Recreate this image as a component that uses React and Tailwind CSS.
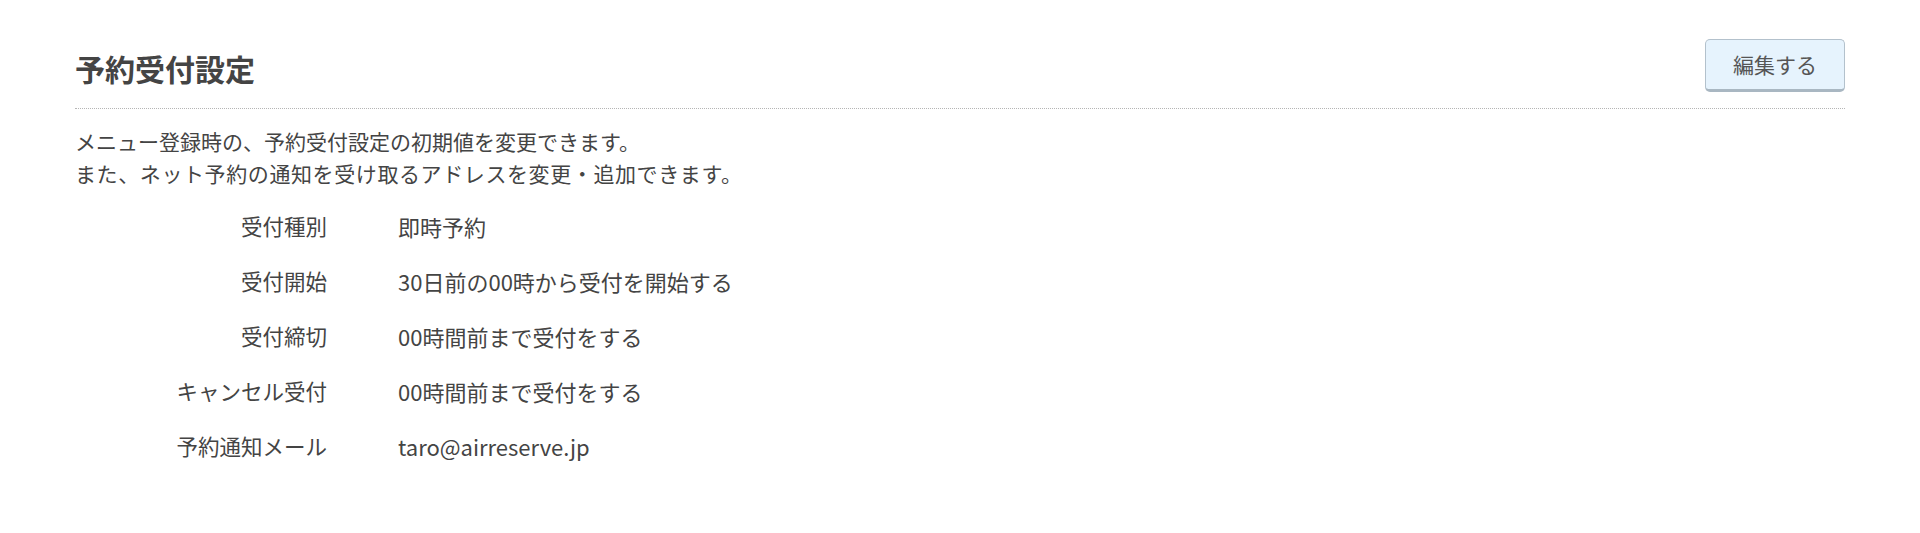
import React from 'react';

const rows = [
  { label: '受付種別', value: '即時予約' },
  { label: '受付開始', value: '30日前の00時から受付を開始する' },
  { label: '受付締切', value: '00時間前まで受付をする' },
  { label: 'キャンセル受付', value: '00時間前まで受付をする' },
  { label: '予約通知メール', value: 'taro@airreserve.jp' },
];

const ReserveSettings = () => {
  return (
    <div className="min-h-[533px] bg-white px-[75px] pt-[39px] text-[#444] font-['Noto_Sans_CJK_JP',sans-serif]">
      <div className="flex items-center justify-between pb-[16px] border-b border-dotted border-[#b5b5b5]">
        <h1 className="text-[30px] font-bold leading-none text-[#444] mt-[4px]">予約受付設定</h1>
        <button className="h-[53px] w-[140px] rounded-[5px] border border-[#b3c1cc] border-b-[3px] border-b-[#a9b7c2] bg-[#e6f3fd] text-[21px] text-[#555]">
          編集する
        </button>
      </div>

      <div className="mt-[16px] text-[21px] leading-[32px] text-[#444]">
        <p>メニュー登録時の、予約受付設定の初期値を変更できます。</p>
        <p className="tracking-[0.6px]">また、ネット予約の通知を受け取るアドレスを変更・追加できます。</p>
      </div>

      <dl className="mt-[10px] text-[#444]">
        {rows.map((row) => (
          <div key={row.label} className="flex h-[55px] items-center">
            <dt className="w-[252px] text-right text-[21.5px]">{row.label}</dt>
            <dd className="ml-[71px] text-[22px]">{row.value}</dd>
          </div>
        ))}
      </dl>
    </div>
  );
};

export default ReserveSettings;
